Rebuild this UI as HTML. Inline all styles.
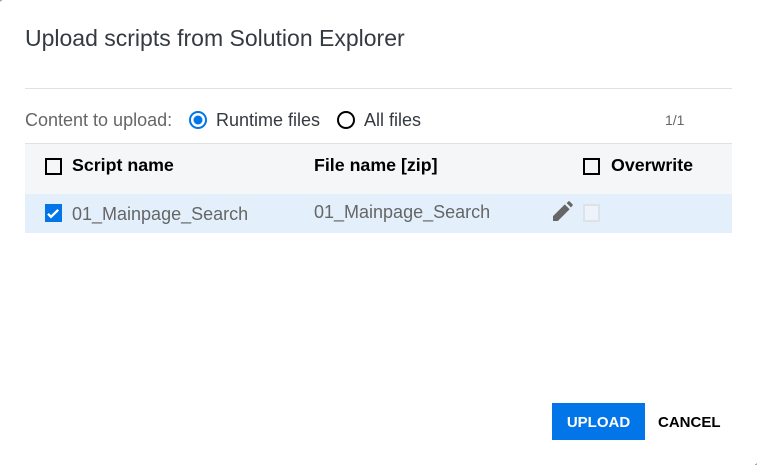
<!DOCTYPE html>
<html>
<head>
<meta charset="utf-8">
<style>
html,body{margin:0;padding:0;background:#fff;}
body{width:757px;height:465px;position:relative;overflow:hidden;font-family:"Liberation Sans",Arial,sans-serif;}
.t{position:absolute;white-space:nowrap;}
.b{font-weight:700;color:#000;font-size:17.8px;line-height:20px;}
.box{position:absolute;box-sizing:border-box;width:17px;height:17px;border:2px solid #000;}
.r{position:absolute;}
</style>
</head>
<body>
<div class="r" style="left:0;top:0;width:2px;height:1px;background:#aaa;"></div>
<div class="r" style="left:0;top:1px;width:1px;height:1px;background:#ccc;"></div>
<div class="r" style="left:755px;top:464px;width:2px;height:1px;background:#aaa;"></div>
<div class="r" style="left:756px;top:463px;width:1px;height:1px;background:#ccc;"></div>

<div class="t" style="left:25px;top:24px;font-size:23px;line-height:28px;color:#343a40;">Upload scripts from Solution Explorer</div>
<div class="r" style="left:25px;top:88px;width:707px;height:1px;background:#dee2e6;"></div>

<div class="t" style="left:25px;top:110px;font-size:18px;line-height:20px;color:#666;">Content to upload:</div>
<svg class="r" style="left:188px;top:110px" width="20" height="20"><circle cx="10" cy="10" r="8" fill="none" stroke="#0275e8" stroke-width="2"/><circle cx="10" cy="10" r="4.5" fill="#0275e8"/></svg>
<div class="t" style="left:216px;top:110px;font-size:18px;line-height:20px;color:#343a40;">Runtime files</div>
<svg class="r" style="left:336px;top:110px" width="20" height="20"><circle cx="10" cy="10" r="8" fill="none" stroke="#000" stroke-width="2"/></svg>
<div class="t" style="left:364px;top:110px;font-size:18px;line-height:20px;color:#343a40;">All files</div>
<div class="t" style="left:665px;top:111px;font-size:14px;line-height:18px;color:#666;">1/1</div>

<div class="r" style="left:25px;top:143px;width:707px;height:51px;background:#f4f6f8;border-top:1px solid #dee2e6;box-sizing:border-box;"></div>
<div class="r" style="left:25px;top:194px;width:707px;height:38.5px;background:#e3f0fc;"></div>

<div class="box" style="left:45px;top:158px;"></div>
<div class="t b" style="left:72px;top:155px;">Script name</div>
<div class="t b" style="left:314px;top:155px;">File name [zip]</div>
<div class="box" style="left:583px;top:158px;"></div>
<div class="t b" style="left:611px;top:155px;">Overwrite</div>

<svg class="r" style="left:45px;top:204px" width="17" height="18"><rect width="17" height="18" fill="#0275e8"/><path d="M3 9.8l3 3 7.2-7" fill="none" stroke="#fff" stroke-width="2.4"/></svg>
<div class="t" style="left:72px;top:204px;font-size:18px;line-height:20px;color:#666;">01_Mainpage_Search</div>
<div class="t" style="left:314px;top:202px;font-size:18px;line-height:20px;color:#666;">01_Mainpage_Search</div>
<svg class="r" style="left:553px;top:201px" width="20" height="20" viewBox="0 0 19 19"><path fill="#666" d="M0 19v-4.6L11.2 3.2l4.6 4.6L4.6 19zM13 2l1.5-1.5a1 1 0 0 1 1.4 0l2.6 2.6a1 1 0 0 1 0 1.4L17 6z"/></svg>
<div class="box" style="left:583px;top:204px;height:18px;border-color:#dde1e8;background:#edf2fb;"></div>

<div class="r" style="left:552px;top:403px;width:93px;height:37px;background:#0275e8;"></div>
<div class="t" style="left:552px;top:404px;width:93px;text-align:center;font-size:15px;font-weight:700;line-height:37px;color:#fff;">UPLOAD</div>
<div class="t" style="left:658px;top:404px;font-size:15px;font-weight:700;line-height:37px;color:#000;">CANCEL</div>
</body>
</html>
